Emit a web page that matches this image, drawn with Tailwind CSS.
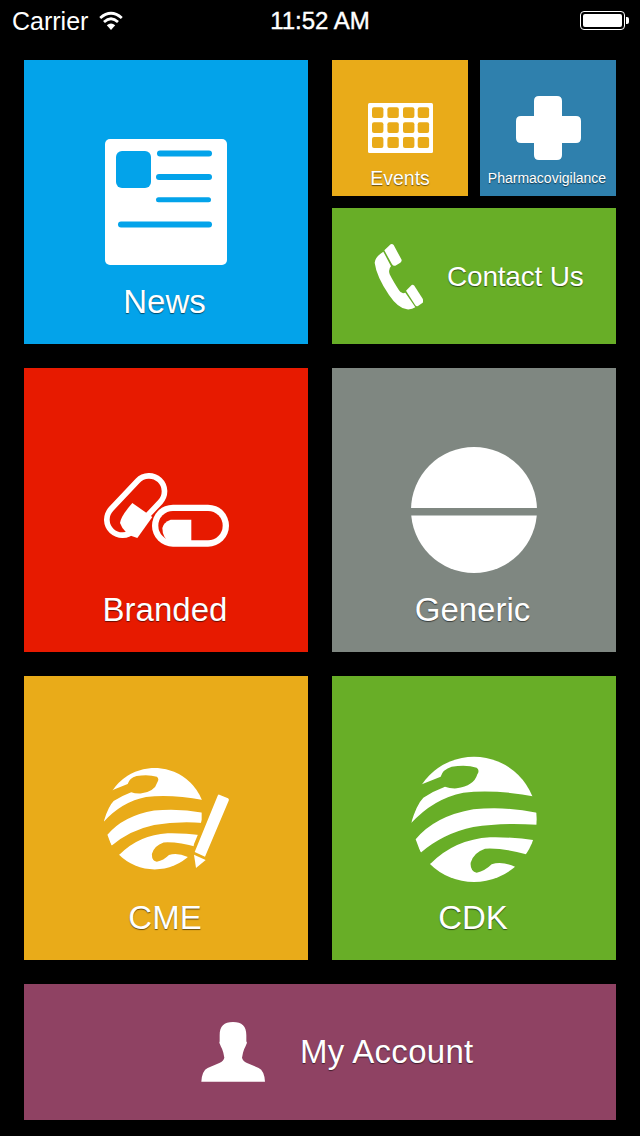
<!DOCTYPE html>
<html>
<head>
<meta charset="utf-8">
<script src="https://cdn.jsdelivr.net/npm/@tailwindcss/browser@4"></script>
</head>
<body class="bg-black font-['Liberation_Sans',Arial,sans-serif] text-white">
<div class="w-[640px] h-[1136px] bg-black overflow-hidden">
  <!-- status bar -->
  <div class="h-[60px] relative">
    <div class="flex items-center h-[42px] pl-3 text-[25px] leading-[42px]">
      <span>Carrier</span>
      <svg class="ml-[11px] mb-[2px]" width="24" height="19" viewBox="0 0 24 19" fill="none" stroke="#fff">
        <path d="M1.2 7 Q12 -2.4 22.8 7" stroke-width="2.8"/>
        <path d="M5 11 Q12 4.6 19 11" stroke-width="2.8"/>
        <path d="M12 19 L7.8 14.2 Q12 10.6 16.2 14.2 Z" fill="#fff" stroke="none"/>
      </svg>
    </div>
    <span class="absolute left-0 right-0 top-0 text-center text-[24px] leading-[42px] [-webkit-text-stroke:0.4px_white]">11:52 AM</span>
    <div class="absolute left-[580px] top-[11px] flex items-center">
      <div class="w-[45px] h-[19px] rounded-[4px] border border-white p-[2px]"><div class="w-full h-full bg-white rounded-[2px]"></div></div>
      <div class="w-[3px] h-[7px] bg-white rounded-r-[2px] ml-[1px]"></div>
    </div>
  </div>

  <div class="grid grid-cols-2 gap-6 px-6 [text-shadow:0_1px_1px_rgba(0,0,0,0.55)]">
    <!-- News -->
    <div class="h-[284px] bg-[#03a3ea] flex flex-col items-center pt-[79px]">
      <svg width="122" height="126" viewBox="0 0 122 126">
        <rect width="122" height="126" rx="5" fill="#fff"/>
        <rect x="11" y="12" width="35" height="37" rx="6" fill="#03a3ea"/>
        <g stroke="#03a3ea" stroke-linecap="round" fill="none">
          <path d="M55 14.5H104" stroke-width="6"/>
          <path d="M54 38H104" stroke-width="6"/>
          <path d="M53.5 60.8H103.5" stroke-width="5"/>
          <path d="M16 85.5H104" stroke-width="6"/>
        </g>
      </svg>
      <span class="mt-[18px] mr-[3px] text-[33px] leading-[38px]">News</span>
    </div>

    <!-- right top -->
    <div class="h-[284px] grid grid-cols-2 grid-rows-2 gap-3">
      <div class="bg-[#e9ab19] flex flex-col items-center pt-[43px]">
        <svg width="65" height="50" viewBox="0 0 65 50">
          <rect width="65" height="50" rx="1.5" fill="#fff"/>
          <g fill="#e9ab19">
            <rect x="4" y="4.3" width="11.4" height="10.8" rx="2"/><rect x="19.4" y="4.3" width="11.4" height="10.8" rx="2"/><rect x="35" y="4.3" width="11.4" height="10.8" rx="2"/><rect x="49.7" y="4.3" width="11.4" height="10.8" rx="2"/>
            <rect x="4" y="19.3" width="11.4" height="10.8" rx="2"/><rect x="19.4" y="19.3" width="11.4" height="10.8" rx="2"/><rect x="35" y="19.3" width="11.4" height="10.8" rx="2"/><rect x="49.7" y="19.3" width="11.4" height="10.8" rx="2"/>
            <rect x="4" y="34" width="11.4" height="11" rx="2"/><rect x="19.4" y="34" width="11.4" height="11" rx="2"/><rect x="35" y="34" width="11.4" height="11" rx="2"/><rect x="49.7" y="34" width="11.4" height="11" rx="2"/>
          </g>
        </svg>
        <span class="mt-[13px] text-[19.5px] leading-[24px]">Events</span>
      </div>
      <div class="bg-[#2f80ad] flex flex-col items-center pt-[36px]">
        <svg width="65" height="64" viewBox="0 0 65 64">
          <path fill="#fff" d="M23 0H41Q46 0 46 5V20H60Q65 20 65 25V42Q65 47 60 47H46V59Q46 64 41 64H23Q18 64 18 59V47H5Q0 47 0 42V25Q0 20 5 20H18V5Q18 0 23 0Z"/>
        </svg>
        <span class="mt-[9px] mr-[2px] text-[14px] leading-[18px] whitespace-nowrap">Pharmacovigilance</span>
      </div>
      <div class="col-span-2 bg-[#68ae27] flex items-center pl-[41px] gap-[24px]">
        <svg width="50" height="70" viewBox="70 60 150 210">
          <g fill="#fff">
            <path d="M104 88 L123 70 Q128 68 132 72 L155 115 Q158 120 152 125 L137 134 Q131 136 127 130Z"/>
            <path d="M101 92 Q76 108 75 125 Q80 165 118 222 Q145 262 172 265 Q187 266 197 259 L167 215 Q155 220 148 208 Q130 180 120 160 Q115 145 124 136 Z"/>
            <path d="M169 209 L186 192 Q190 190 194 194 L221 236 Q224 241 219 245 L205 255 Q200 257 197 253Z"/>
          </g>
        </svg>
        <span class="mt-[2px] text-[28px] leading-[34px] tracking-[-0.2px]">Contact Us</span>
      </div>
    </div>

    <!-- Branded -->
    <div class="h-[284px] bg-[#e71a00] flex flex-col items-center pt-[105px]">
      <svg width="125" height="74" viewBox="40 40 375 222" fill="none">
        <path d="M175 95 L95 180" stroke="#fff" stroke-width="110" stroke-linecap="round"/>
        <path d="M175 95 L95 180" stroke="#e71a00" stroke-width="76" stroke-linecap="round"/>
        <path d="M125 130 L185 172 L140 235 Q100 225 88 190 Q90 170 125 130Z" fill="#fff"/>
        <path d="M247 198 H352" stroke="#e71a00" stroke-width="132" stroke-linecap="round"/>
        <path d="M247 198 H352" stroke="#fff" stroke-width="126" stroke-linecap="round"/>
        <path d="M247 198 H352" stroke="#e71a00" stroke-width="88" stroke-linecap="round"/>
        <path d="M240 180 H302 V250 H240 Q215 235 215 205 Q218 188 240 180Z" fill="#fff"/>
      </svg>
      <span class="mt-[44px] mr-[2px] text-[33px] leading-[38px]">Branded</span>
    </div>

    <!-- Generic -->
    <div class="h-[284px] bg-[#7f8781] flex flex-col items-center pt-[79px]">
      <svg width="126" height="126" viewBox="0 0 126 126">
        <circle cx="63" cy="63" r="63" fill="#fff"/>
        <rect x="0" y="61" width="126" height="7.5" fill="#7f8781"/>
      </svg>
      <span class="mt-[18px] mr-[3px] text-[33px] leading-[38px]">Generic</span>
    </div>

    <!-- CME -->
    <div class="h-[284px] bg-[#e9ab19] flex flex-col items-center pt-[92px]">
      <svg width="125" height="102" viewBox="40 40 375 306">
        <defs>
          <clipPath id="cme-globe"><circle cx="222" cy="220" r="188"/></clipPath>
          <clipPath id="cme-cut"><path d="M0 0H345L333 160V195L325 232L310 268L296 346H0Z"/></clipPath>
        </defs>
        <g clip-path="url(#cme-cut)">
          <g fill="#fff" transform="translate(192 192) scale(0.81) translate(-222 -220)" clip-path="url(#cme-globe)">
            <path d="M60 117 L122 92 Q128 70 155 62 Q200 55 230 65 Q240 72 232 85 Q222 120 170 127 Q150 128 135 122 Q100 135 70 155 Q50 175 33 232 Q100 158 190 140 Q290 128 420 155 L420 0 L40 0Z"/>
            <path d="M47 280 Q105 210 220 190 Q320 180 420 202 L420 237 Q310 228 220 243 Q130 262 62 320 Z"/>
            <path d="M93 352 Q165 280 270 274 Q330 272 420 285 L378 325 Q310 305 255 308 Q220 320 212 350 Q210 375 230 380 Q255 375 275 355 Q305 345 345 362 L420 420 L40 420 L40 385Z"/>
          </g>
        </g>
        <path d="M386 120 L412 131 Q416 134 414 138 L343 306 L312 292 L381 123 Q383 119 386 120Z" fill="#fff"/>
        <path d="M310 300 L345 316 L316 340Z" fill="#fff"/>
      </svg>
      <span class="mt-[29px] mr-[2px] text-[33px] leading-[38px]">CME</span>
    </div>

    <!-- CDK -->
    <div class="h-[284px] bg-[#68ae27] flex flex-col items-center pt-[80px]">
      <svg width="128" height="127" viewBox="30 30 384 381" fill="#fff">
        <defs>
          <clipPath id="cdk-globe"><circle cx="222" cy="220" r="188"/></clipPath>
        </defs>
        <g clip-path="url(#cdk-globe)">
          <path d="M60 117 L122 92 Q128 70 155 62 Q200 55 230 65 Q240 72 232 85 Q222 120 170 127 Q150 128 135 122 Q100 135 70 155 Q50 175 33 232 Q100 158 190 140 Q290 128 420 155 L420 0 L40 0Z"/>
          <path d="M47 280 Q105 210 220 190 Q320 180 420 202 L420 237 Q310 228 220 243 Q130 262 62 320 Z"/>
          <path d="M93 352 Q165 280 270 274 Q330 272 420 285 L378 325 Q310 305 255 308 Q220 320 212 350 Q210 375 230 380 Q255 375 275 355 Q305 345 345 362 L420 420 L40 420 L40 385Z"/>
        </g>
      </svg>
      <span class="mt-[16px] mr-[2px] text-[33px] leading-[38px]">CDK</span>
    </div>

    <!-- My Account -->
    <div class="col-span-2 h-[136px] bg-[#8f4263] flex items-center pl-[177px] gap-[35px]">
      <svg width="64" height="60" viewBox="32 38 192 180" fill="#fff">
        <path d="M128 38 C155 38 168 50 168 78 L168 96 L170 100 L165 112 Q161 118 158 130 L155 145 Q157 155 170 161 L205 176 Q222 184 224 217 L33 217 Q35 184 52 176 L87 161 Q100 155 102 145 L99 130 Q96 118 92 112 L87 100 L88 96 L88 78 C88 50 101 38 128 38Z"/>
      </svg>
      <span class="text-[33px] leading-[38px] tracking-[0.3px]">My Account</span>
    </div>
  </div>
</div>
</body>
</html>
